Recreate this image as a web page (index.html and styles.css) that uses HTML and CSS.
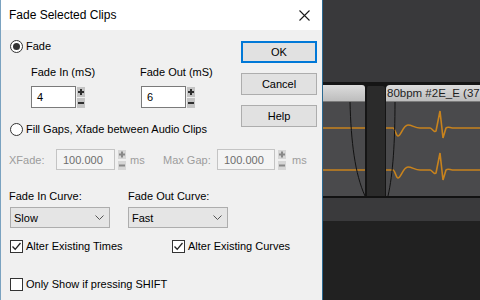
FILE: index.html
```html
<!DOCTYPE html>
<html>
<head>
<meta charset="utf-8">
<link rel="stylesheet" href="styles.css">
</head>
<body>
<div class="screen">
  <div class="dialog">
    <div class="titlebar">
      <span class="title">Fade Selected Clips</span>
      <svg class="close" width="11" height="11" viewBox="0 0 11 11"><path d="M0.5 0.5L10.5 10.5M10.5 0.5L0.5 10.5" stroke="#1a1a1a" stroke-width="1.1"/></svg>
    </div>
    <div class="dlg-body">
      <div class="form">
        <div class="row r1"><span class="radio on"></span><span class="rtext">Fade</span></div>
        <div class="r2"><span>Fade In (mS)</span><span>Fade Out (mS)</span></div>
        <div class="r3">
          <div class="field">
            <div class="input in-short">4</div>
            <svg class="spin" width="8" height="21" viewBox="0 0 8 21"><rect x="0" y="0" width="8" height="10" fill="#c4c4c4"/><rect x="0" y="11" width="8" height="10" fill="#c4c4c4"/><path d="M4 2v6M1 5h6" stroke="#2e2e2e" stroke-width="2"/><path d="M1 16h6" stroke="#2e2e2e" stroke-width="2"/></svg>
          </div>
          <div class="field">
            <div class="input in-short">6</div>
            <svg class="spin" width="8" height="21" viewBox="0 0 8 21"><rect x="0" y="0" width="8" height="10" fill="#c4c4c4"/><rect x="0" y="11" width="8" height="10" fill="#c4c4c4"/><path d="M4 2v6M1 5h6" stroke="#2e2e2e" stroke-width="2"/><path d="M1 16h6" stroke="#2e2e2e" stroke-width="2"/></svg>
          </div>
        </div>
        <div class="row r4"><span class="radio"></span><span class="rtext">Fill Gaps, Xfade between Audio Clips</span></div>
        <div class="row r5">
          <span class="dis xlabel">XFade:</span>
          <div class="input dinput w59">100.000</div>
          <svg class="spin dspin" width="8" height="20" viewBox="0 0 8 20"><rect x="0" y="0" width="8" height="9" fill="#d6d6d6"/><rect x="0" y="11" width="8" height="9" fill="#d6d6d6"/><path d="M4 1.5v6M1 4.5h6" stroke="#888" stroke-width="2"/><path d="M1 15.5h6" stroke="#888" stroke-width="2"/></svg>
          <span class="dis ms1">ms</span>
          <span class="dis mlabel">Max Gap:</span>
          <div class="input dinput w58">100.000</div>
          <svg class="spin dspin" width="8" height="20" viewBox="0 0 8 20"><rect x="0" y="0" width="8" height="9" fill="#d6d6d6"/><rect x="0" y="11" width="8" height="9" fill="#d6d6d6"/><path d="M4 1.5v6M1 4.5h6" stroke="#888" stroke-width="2"/><path d="M1 15.5h6" stroke="#888" stroke-width="2"/></svg>
          <span class="dis ms2">ms</span>
        </div>
        <div class="r6"><span>Fade In Curve:</span><span>Fade Out Curve:</span></div>
        <div class="r7">
          <div class="select s1"><span>Slow</span><svg width="9" height="5" viewBox="0 0 9 5"><path d="M0.5 0.5L4.5 4.5L8.5 0.5" fill="none" stroke="#555" stroke-width="1"/></svg></div>
          <div class="select"><span>Fast</span><svg width="9" height="5" viewBox="0 0 9 5"><path d="M0.5 0.5L4.5 4.5L8.5 0.5" fill="none" stroke="#555" stroke-width="1"/></svg></div>
        </div>
        <div class="r8">
          <div class="check-row c1"><span class="cbox"><svg width="11" height="11" viewBox="0 0 11 11"><path d="M1.5 5.5L4.2 8.3L9.5 2" fill="none" stroke="#222" stroke-width="1.3"/></svg></span><span>Alter Existing Times</span></div>
          <div class="check-row"><span class="cbox"><svg width="11" height="11" viewBox="0 0 11 11"><path d="M1.5 5.5L4.2 8.3L9.5 2" fill="none" stroke="#222" stroke-width="1.3"/></svg></span><span>Alter Existing Curves</span></div>
        </div>
        <div class="r9">
          <div class="check-row c1"><span class="cbox"></span><span>Only Show if pressing SHIFT</span></div>
        </div>
      </div>
      <div class="buttons">
        <div class="btn default">OK</div>
        <div class="btn">Cancel</div>
        <div class="btn">Help</div>
      </div>
    </div>
  </div>

  <div class="app">
    <div class="app-top"></div>
    <div class="track">
      <div class="clip clip-a">
        <div class="clip-head"></div>
        <div class="clip-body">
          <svg width="42" height="94" viewBox="0 0 42 94">
            <path d="M0 26H42M0 68H42" stroke="#c8831d" stroke-width="1.6" fill="none"/>
            <path d="M27 0C28 40 32 72 42 94" stroke="#111" stroke-width="1" fill="none"/>
          </svg>
        </div>
      </div>
      <div class="gapcol"></div>
      <div class="clip clip-b">
        <div class="clip-head">80bpm #2E_E (37</div>
        <div class="clip-body">
          <svg width="94" height="94" viewBox="0 0 94 94">
            <path d="M0 26H7C9 26 10 34 12 34C15 34 17 23 22 23C26 23 29 26 34 26H44C46 26 48 31 50 29L54 9L57 36L60 26C62 24 64 26 68 26H94" stroke="#c8831d" stroke-width="1.6" fill="none"/>
            <path d="M0 68H7C9 68 10 76 12 76C15 76 17 65 22 65C26 65 29 68 34 68H44C46 68 48 73 50 71L54 51L57 78L60 68C62 66 64 68 68 68H94" stroke="#c8831d" stroke-width="1.6" fill="none"/>
            <path d="M9 0C9 40 7 72 2 94" stroke="#111" stroke-width="1" fill="none"/>
          </svg>
        </div>
      </div>
    </div>
    <div class="track-foot"></div>
    <div class="app-bottom"></div>
  </div>
</div>
</body>
</html>
```

FILE: styles.css
```css
html, body {
  margin: 0;
  padding: 0;
}
body {
  width: 480px;
  height: 300px;
  overflow: hidden;
  font-family: "Liberation Sans", Arial, sans-serif;
  font-size: 11px;
  color: #000;
}
.screen {
  display: flex;
  height: 300px;
}

/* dialog */
.dialog {
  width: 323px;
  flex: none;
  box-sizing: border-box;
  border-left: 1px solid #7aa2c0;
  border-right: 1px solid #2c6a92;
  background: #f0f0f0;
  display: flex;
  flex-direction: column;
}
.titlebar {
  height: 30px;
  flex: none;
  background: #fff;
  display: flex;
  align-items: center;
  justify-content: space-between;
  padding: 0 12px 0 8px;
}
.title {
  font-size: 12px;
  color: #000;
}
.close {
  display: block;
}
.dlg-body {
  flex: 1;
  display: grid;
  grid-template-columns: 1fr 76px;
  align-items: start;
  padding: 9px 5px 0 8px;
}
.form {
  grid-row: 1;
  grid-column: 1 / 3;
  display: flex;
  flex-direction: column;
}
.buttons {
  grid-row: 1;
  grid-column: 2;
  margin-top: 2px;
  display: flex;
  flex-direction: column;
  gap: 10px;
}
.btn {
  height: 22px;
  box-sizing: border-box;
  border: 1px solid #adadad;
  background: #e1e1e1;
  display: flex;
  align-items: center;
  justify-content: center;
}
.btn.default {
  border: 2px solid #0078d7;
}

.row {
  display: flex;
  align-items: center;
  line-height: 14px;
}
.r1 { height: 14px; }
.r2 {
  margin-top: 12px;
  height: 14px;
  line-height: 14px;
  padding-left: 22px;
  display: grid;
  grid-template-columns: 109px auto;
}
.r3 {
  margin-top: 7px;
  height: 22px;
  padding-left: 22px;
  display: grid;
  grid-template-columns: 110px auto;
}
.r4 { margin-top: 14px; height: 14px; }
.r5 { margin-top: 13px; height: 21px; }
.r6 {
  margin-top: 19px;
  height: 14px;
  line-height: 14px;
  display: grid;
  grid-template-columns: 119px auto;
}
.r7 {
  margin-top: 4px;
  height: 21px;
  display: grid;
  grid-template-columns: 119px auto;
}
.r8 {
  margin-top: 11px;
  height: 14px;
  display: grid;
  grid-template-columns: 163px auto;
}
.r9 {
  margin-top: 24px;
  height: 14px;
}

.radio {
  width: 13px;
  height: 13px;
  box-sizing: border-box;
  border: 1px solid #333;
  border-radius: 50%;
  background: #fff;
  margin-left: 1px;
  display: flex;
  align-items: center;
  justify-content: center;
  flex: none;
}
.radio.on::after {
  content: "";
  width: 7px;
  height: 7px;
  border-radius: 50%;
  background: #333;
}
.rtext {
  margin-left: 3px;
}

.field {
  display: flex;
  align-items: center;
}
.input {
  height: 22px;
  box-sizing: border-box;
  border: 1px solid #7a7a7a;
  background: #fff;
  padding-left: 5px;
  display: flex;
  align-items: center;
}
.in-short { width: 45px; }
.spin {
  display: block;
  margin-left: 1px;
  flex: none;
}
.dinput {
  height: 21px;
  border-color: #c4c4c4;
  background: #f4f4f4;
  color: #6d6d6d;
  padding-left: 6px;
}
.w59 { width: 59px; }
.w58 { width: 58px; }
.dspin { margin-left: 3px; }
.dis { color: #9c9c9c; }
.xlabel { width: 47px; }
.ms1 { margin-left: 4px; width: 33px; }
.mlabel { width: 54px; }
.ms2 { margin-left: 6px; }

.select {
  width: 100px;
  height: 21px;
  box-sizing: border-box;
  border: 1px solid #adadad;
  background: #e5e5e5;
  display: flex;
  align-items: center;
  justify-content: space-between;
  padding: 0 5px 0 3px;
}
.select svg { display: block; }
.s1 { margin-left: 1px; }

.check-row {
  display: flex;
  align-items: center;
  height: 14px;
}
.c1 { margin-left: 1px; }
.cbox {
  width: 13px;
  height: 13px;
  box-sizing: border-box;
  border: 1px solid #333;
  background: #fff;
  margin-right: 3px;
  flex: none;
}
.cbox svg { display: block; }

/* app behind */
.app {
  flex: 1;
  min-width: 0;
  display: flex;
  flex-direction: column;
  background: #39393b;
}
.app-top {
  height: 82px;
  flex: none;
}
.track {
  height: 114px;
  flex: none;
  box-sizing: border-box;
  padding-top: 3px;
  background: #151515;
  display: flex;
}
.clip {
  display: flex;
  flex-direction: column;
}
.clip-a { width: 42px; flex: none; }
.clip-b { flex: 1; min-width: 0; }
.clip-head {
  height: 16px;
  flex: none;
  background: linear-gradient(#dcdcdc, #bdbdbd);
  border-bottom: 1px solid #7a7a7a;
}
.clip-a .clip-head { border-top-right-radius: 3px; }
.clip-b .clip-head {
  border-top-left-radius: 4px;
  padding-left: 1px;
  font-size: 11.5px;
  line-height: 16px;
  color: #1e1e1e;
  white-space: nowrap;
  overflow: hidden;
}
.clip-body {
  flex: 1;
  background: #4a4a4c;
  overflow: hidden;
}
.clip-body svg { display: block; }
.gapcol {
  width: 21px;
  flex: none;
  box-sizing: border-box;
  margin-top: 1px;
  border-left: 2px solid #151515;
  border-right: 1px solid #151515;
  border-radius: 3px 3px 0 0;
  background: #2b2b2b;
}
.track-foot {
  height: 25px;
  flex: none;
  box-sizing: border-box;
  border-top: 2px solid #121212;
  background: #3a3a3c;
}
.app-bottom {
  flex: 1;
  background: #212121;
}
```
